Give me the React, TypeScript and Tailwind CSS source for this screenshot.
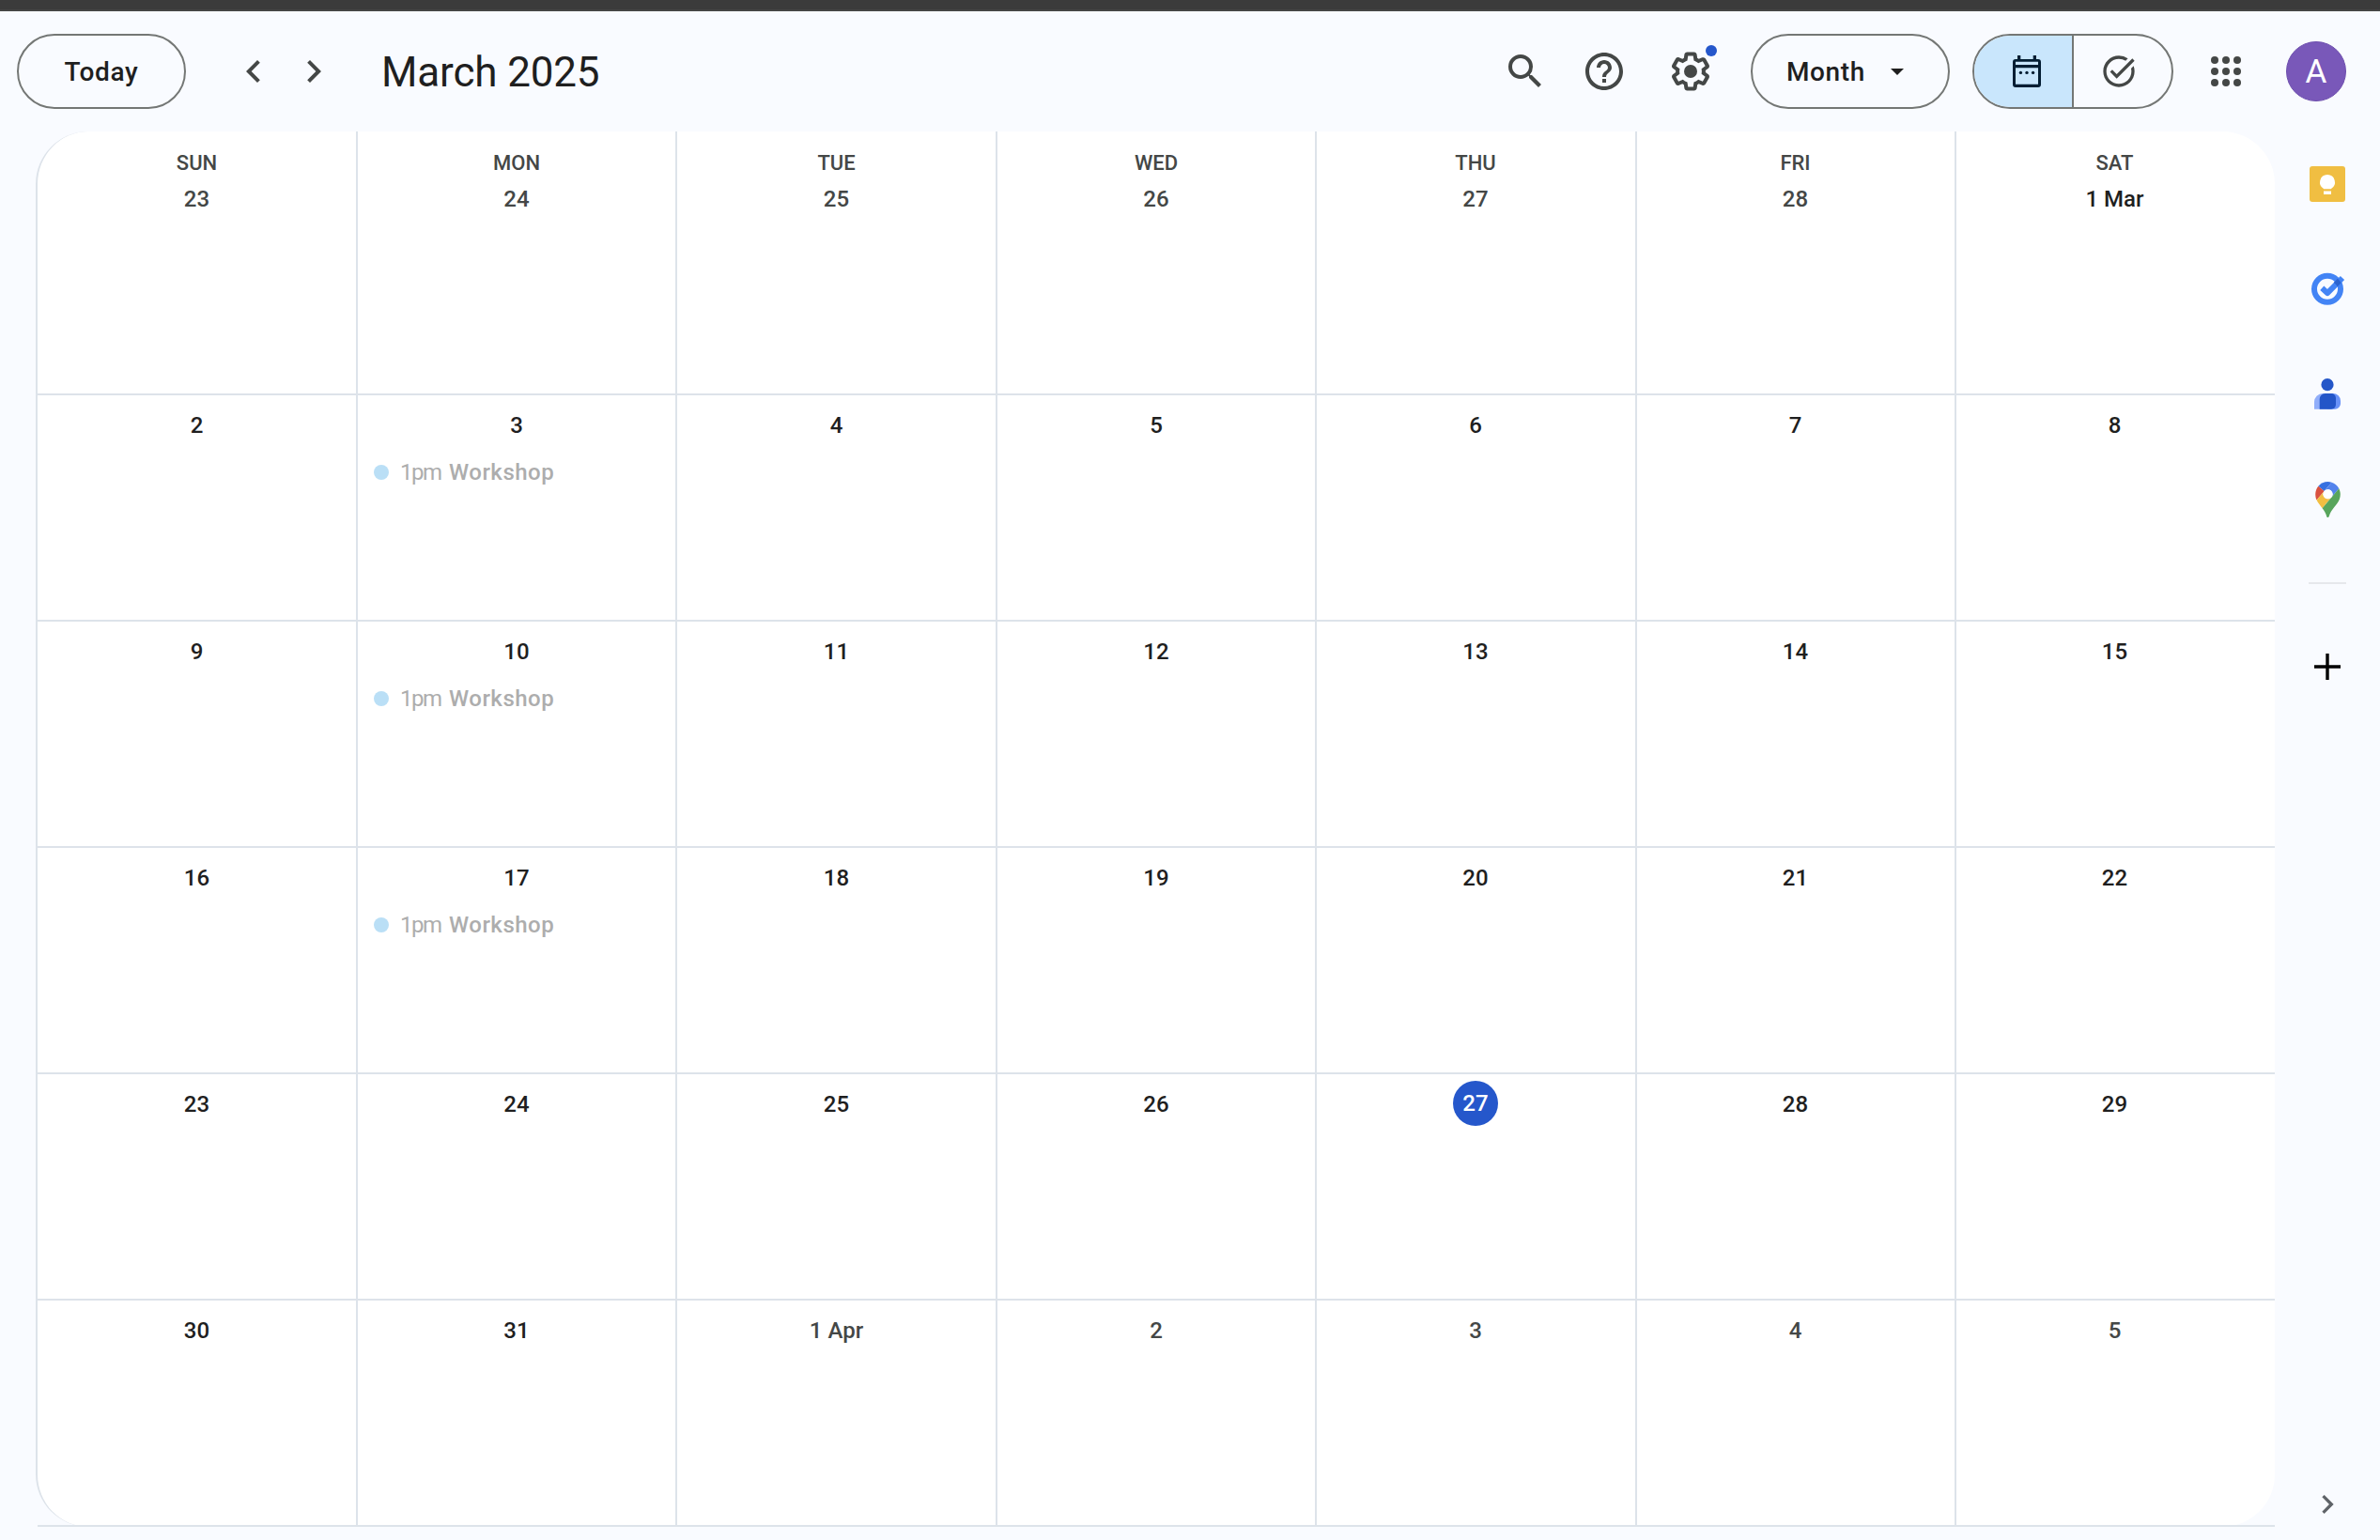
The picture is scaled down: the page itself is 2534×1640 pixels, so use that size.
import React from "react";
import { MdSearch, MdHelpOutline, MdTaskAlt } from "react-icons/md";

type Day = { label: string; tone?: "muted" | "today"; event?: boolean };

const weekdays = ["SUN", "MON", "TUE", "WED", "THU", "FRI", "SAT"];

const muted = (label: string): Day => ({ label, tone: "muted" });
const day = (label: string): Day => ({ label });
const busy = (label: string): Day => ({ label, event: true });

const weeks: Day[][] = [
  [muted("23"), muted("24"), muted("25"), muted("26"), muted("27"), muted("28"), day("1 Mar")],
  [day("2"), busy("3"), day("4"), day("5"), day("6"), day("7"), day("8")],
  [day("9"), busy("10"), day("11"), day("12"), day("13"), day("14"), day("15")],
  [day("16"), busy("17"), day("18"), day("19"), day("20"), day("21"), day("22")],
  [day("23"), day("24"), day("25"), day("26"), { label: "27", tone: "today" }, day("28"), day("29")],
  [day("30"), day("31"), muted("1 Apr"), muted("2"), muted("3"), muted("4"), muted("5")],
];

function Chevron({ dir, className }: { dir: "left" | "right"; className: string }) {
  return (
    <svg viewBox="0 0 24 24" className={className} fill="currentColor">
      {dir === "left" ? (
        <path d="M15.41 7.41 14 6l-6 6 6 6 1.41-1.41L10.83 12z" />
      ) : (
        <path d="M10 6 8.59 7.41 13.17 12l-4.58 4.59L10 18l6-6z" />
      )}
    </svg>
  );
}

function GearIcon() {
  return (
    <svg viewBox="0 0 24 24" className="size-12" fill="currentColor">
      <path d="M13.85 22.25h-3.7c-.74 0-1.36-.54-1.45-1.27l-.27-1.89c-.27-.14-.53-.29-.79-.46l-1.8.72c-.7.26-1.47-.03-1.81-.65L2.2 15.53c-.35-.66-.2-1.44.36-1.88l1.53-1.19c-.01-.15-.02-.3-.02-.46 0-.15.01-.31.02-.46l-1.52-1.19c-.59-.45-.74-1.26-.37-1.88l1.85-3.19c.34-.62 1.11-.9 1.79-.63l1.81.73c.26-.17.52-.32.78-.46l.27-1.91c.09-.7.71-1.25 1.44-1.25h3.7c.74 0 1.36.54 1.45 1.27l.27 1.89c.27.14.53.29.79.46l1.8-.72c.71-.26 1.48.03 1.82.65l1.84 3.18c.36.66.2 1.44-.36 1.88l-1.52 1.19c.01.15.02.3.02.46s-.01.31-.02.46l1.52 1.19c.56.45.72 1.23.37 1.86l-1.86 3.22c-.34.62-1.11.9-1.8.63l-1.8-.72c-.26.17-.52.32-.78.46l-.27 1.91c-.1.68-.72 1.22-1.46 1.22zm-3.23-2h2.76l.37-2.55.53-.22c.44-.18.88-.44 1.34-.78l.45-.34 2.38.96 1.38-2.4-2.03-1.58.07-.56c.03-.26.06-.51.06-.78s-.03-.53-.06-.78l-.07-.56 2.03-1.58-1.39-2.4-2.39.96-.45-.35c-.42-.32-.87-.58-1.33-.77l-.52-.22-.37-2.55h-2.76l-.37 2.55-.53.21c-.44.19-.88.44-1.34.79l-.45.33-2.38-.95-1.39 2.39 2.03 1.58-.07.56a7 7 0 0 0-.06.79c0 .26.02.53.06.78l.07.56-2.03 1.58 1.38 2.4 2.39-.96.45.35c.43.33.86.58 1.33.77l.53.22.38 2.55z" />
      <circle cx="12" cy="12" r="3.5" />
    </svg>
  );
}

function CalendarIcon() {
  return (
    <svg viewBox="0 0 40 40" className="size-10">
      <path
        fill="#041e33"
        fillRule="evenodd"
        d="M10 3h3.3v4h13.4V3H30v4h2a3 3 0 0 1 3 3v24a3 3 0 0 1-3 3H8a3 3 0 0 1-3-3V10a3 3 0 0 1 3-3h2zM8 9.7V13h24V9.7zM8 16.3v17.4h24V16.3z"
      />
      <circle cx="13.4" cy="21.4" r="1.7" fill="#041e33" />
      <circle cx="20" cy="21.4" r="1.7" fill="#041e33" />
      <circle cx="26.6" cy="21.4" r="1.7" fill="#041e33" />
    </svg>
  );
}

function AppsIcon() {
  return (
    <svg viewBox="0 0 32 32" className="size-8" fill="#444746">
      {[4, 16, 28].map((y) => [4, 16, 28].map((x) => <circle key={`${x}-${y}`} cx={x} cy={y} r="4" />))}
    </svg>
  );
}

function KeepIcon() {
  return (
    <svg viewBox="0 0 38 38" className="size-[38px]">
      <rect width="38" height="38" rx="3" fill="#f0be42" />
      <path fill="#fff" d="M19 9a8 8 0 0 0-4 14.9V24.300h8v-.4A8 8 0 0 0 19 9zM15 26.500h8V30h-8z" />
    </svg>
  );
}

function TasksIcon() {
  return (
    <svg viewBox="0 0 40 40" className="size-10">
      <circle cx="20" cy="20.800" r="14" fill="none" stroke="#4384f5" strokeWidth="6" />
      <path d="m14.300 19.700 5.700 5.400L36 9" fill="none" stroke="#4384f5" strokeWidth="6" strokeLinejoin="round" />
      <path d="M26.700 14 30.900 9.800a17 17 0 0 1 3.700 4.500l-3.900 3.900a12 12 0 0 0-4-4.200z" fill="#2b63cf" />
    </svg>
  );
}

function ContactsIcon() {
  return (
    <svg viewBox="0 0 40 40" className="size-10">
      <circle cx="20" cy="9.700" r="6.600" fill="#2456c8" />
      <path d="M6 35.700V28a9 9 0 0 1 9-9h5v16.700z" fill="#91aefa" />
      <path d="M20 19h6a8 8 0 0 1 8 8v3a6 6 0 0 1-6 5.700h-8z" fill="#6a93f8" />
      <path d="M11.700 35.700V25a6 6 0 0 1 6-6H24a5 5 0 0 1 5 5v6.700a5 5 0 0 1-5 5z" fill="#2456c8" />
    </svg>
  );
}

function MapsIcon() {
  return (
    <svg viewBox="0 0 92.300 132.300" className="h-[38px] w-[27px]">
      <path fill="#3871e0" d="M60.200 2.200C55.800.8 51 0 46.100 0 32 0 19.300 6.400 10.800 16.500l21.800 18.300L60.200 2.200z" />
      <path fill="#d95140" d="M10.800 16.500C4.100 24.500 0 34.900 0 46.100c0 8.700 1.700 15.700 4.600 22l28-33.300-21.800-18.300z" />
      <path fill="#5383ec" d="M46.200 28.500c9.800 0 17.700 7.900 17.700 17.700 0 4.300-1.600 8.300-4.200 11.400 0 0 13.900-16.600 27.500-32.700-5.600-10.800-15.300-19-27-22.700L32.600 34.800c3.300-3.800 8.100-6.300 13.600-6.300" />
      <path fill="#f2be42" d="M46.200 63.800c-9.800 0-17.700-7.900-17.700-17.700 0-4.300 1.500-8.300 4.100-11.300l-28 33.300c4.800 10.600 12.800 19.200 21 29.900l34.100-40.500c-3.300 3.900-8.100 6.300-13.500 6.300" />
      <path fill="#58a55c" d="M59.100 109.200c15.400-24.100 33.300-35 33.300-63 0-7.700-1.900-14.900-5.200-21.300L25.600 98c2.600 3.400 5.300 7.300 7.900 11.300 9.400 14.500 6.800 23.100 12.800 23.100s3.400-8.700 12.800-23.200" />
      <circle cx="46.200" cy="46.200" r="17.700" fill="#fff" />
    </svg>
  );
}

function Header() {
  return (
    <header className="flex h-32 items-center pl-[18px] pr-9 text-[#1f1f1f]">
      <button className="flex h-20 w-[180px] items-center justify-center rounded-full border-2 border-[#747775] pt-0.5 text-[28px] font-medium tracking-[0.7px]">
        Today
      </button>
      <div className="ml-12 flex gap-4 text-[#444746]">
        <Chevron dir="left" className="size-12" />
        <Chevron dir="right" className="size-12" />
      </div>
      <h1 className="ml-12 pt-px text-[44px] leading-none tracking-[-0.15px]">March 2025</h1>

      <div className="ml-auto flex items-center text-[#444746]">
        <MdSearch className="size-12" />
        <MdHelpOutline className="ml-9 size-12" />
        <div className="relative ml-11">
          <GearIcon />
          <span className="absolute -top-1 right-[-4px] size-3 rounded-full bg-[#2557cb]" />
        </div>
        <button className="ml-10 flex h-20 w-[212px] items-center rounded-full border-2 border-[#747775] pl-9 text-[28px] font-medium text-[#1f1f1f]">
          <span className="w-[111px] pt-0.5 text-left tracking-[0.6px]">Month</span>
          <svg viewBox="0 0 14 7" className="h-[7px] w-3.5">
            <path d="M0 0h14L7 7z" fill="#1f1f1f" />
          </svg>
        </button>
        <div className="ml-6 flex h-20 w-[214px] overflow-hidden rounded-full border-2 border-[#747775]">
          <div className="flex w-[106px] items-center justify-center border-r-2 border-[#747775] bg-[#c9e6fc] pl-2">
            <CalendarIcon />
          </div>
          <div className="flex flex-1 items-center justify-center pr-2">
            <MdTaskAlt className="size-10" />
          </div>
        </div>
        <div className="ml-10">
          <AppsIcon />
        </div>
        <div className="ml-12 flex size-16 items-center justify-center rounded-full border border-[#6e4fae] bg-[#7958b9] pt-0.5 text-[35px] text-white">
          A
        </div>
      </div>
    </header>
  );
}

function DayCell({ data, weekday }: { data: Day; weekday?: string }) {
  const tone =
    data.tone === "today" ? "bg-[#2557cb] text-white" : data.tone === "muted" ? "text-[#444746]" : "text-[#1f1f1f]";
  return (
    <div className="flex flex-col items-center border-r-2 border-b-2 border-[#dde3ea] pt-[7px] [&:nth-child(7n)]:border-r-0 [&:nth-child(7n)]:pr-0.5 [&:nth-child(7n+5)]:pr-px [&:nth-child(7n+6)]:pr-px">
      {weekday && (
        <div className="mt-[17px] mb-[3px] h-5 text-[22px] leading-5 font-medium text-[#444746]">{weekday}</div>
      )}
      <div
        className={`flex h-12 min-w-12 items-center justify-center rounded-full text-2xl font-medium whitespace-nowrap ${tone}`}
      >
        <span className={data.tone === "today" ? "" : "pt-0.5"}>{data.label}</span>
      </div>
      {data.event && (
        <div className="mt-[3px] flex h-12 w-full items-center pl-[17px] text-2xl text-[#adadad]">
          <span className="size-4 rounded-full bg-[#badff6]" />
          <span className="ml-3 w-[43px] tracking-[-1.5px]">1pm</span>
          <span className="ml-[9px] font-medium tracking-[0.5px]">Workshop</span>
        </div>
      )}
    </div>
  );
}

function SidePanel() {
  return (
    <aside className="flex w-28 flex-col items-center">
      <div className="mt-[37px] flex h-[38px] items-center">
        <KeepIcon />
      </div>
      <div className="mt-[72px]">
        <TasksIcon />
      </div>
      <div className="mt-[73px]">
        <ContactsIcon />
      </div>
      <div className="mt-[73px]">
        <MapsIcon />
      </div>
      <div className="mt-[69px] h-0.5 w-10 bg-[#e6e8ec]" />
      <svg viewBox="0 0 28 28" className="mt-[74px] size-7">
        <path d="M14 0v28M0 14h28" stroke="#000" strokeWidth="3.4" />
      </svg>
      <Chevron dir="right" className="mt-auto mb-[18px] size-10 text-[#5f6368]" />
    </aside>
  );
}

export default function App() {
  return (
    <div className="flex h-[1640px] w-[2534px] flex-col overflow-hidden bg-[#f9fbff] font-['Roboto',sans-serif]">
      <div className="h-3 shrink-0 border-b-2 border-[#454545] bg-[#3b3b3b]" />
      <Header />
      <div className="flex flex-1">
        <main className="ml-[38px] grid h-[1486px] w-[2384px] grid-cols-[341px_340px_341px_340px_341px_340px_339px] grid-rows-[281px_repeat(5,241px)] rounded-[56px] border-l-2 border-[#dde3ea] bg-white">
          {weeks.map((week, w) =>
            week.map((d, i) => <DayCell key={`${w}-${i}`} data={d} weekday={w === 0 ? weekdays[i] : undefined} />),
          )}
        </main>
        <SidePanel />
      </div>
    </div>
  );
}
